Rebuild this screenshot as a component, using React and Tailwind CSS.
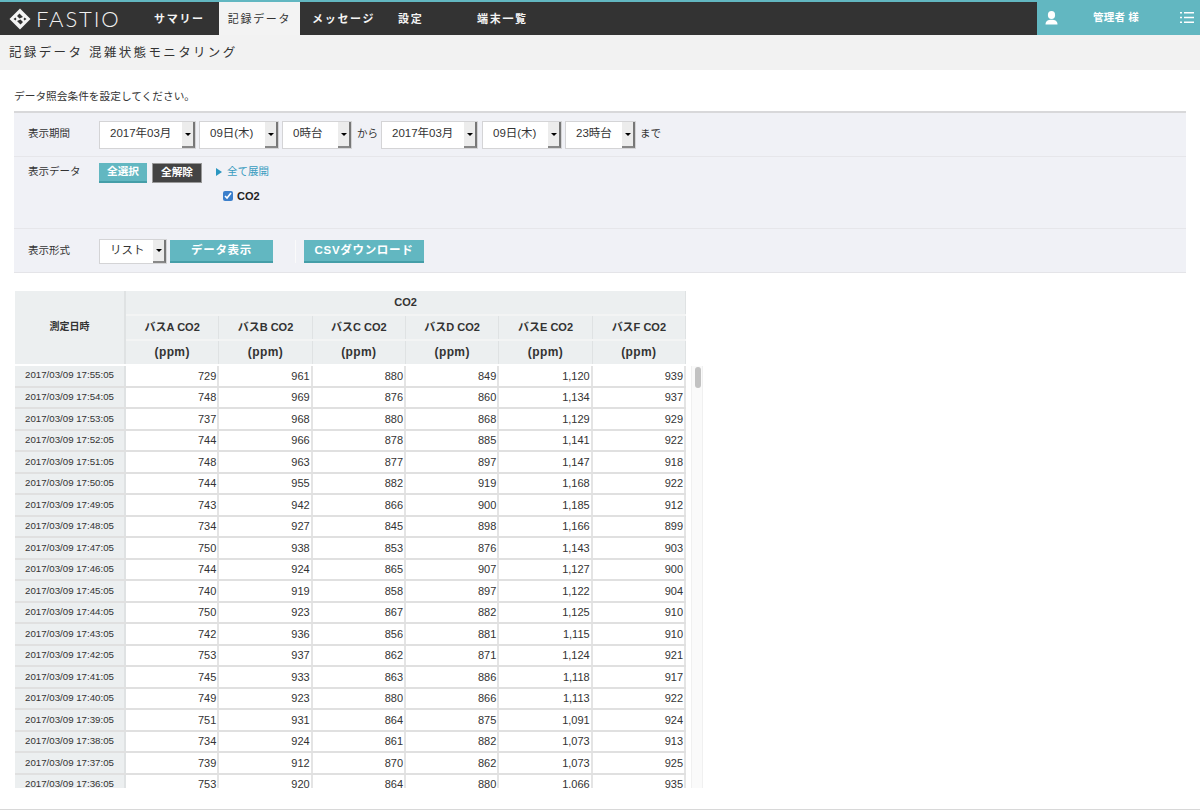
const FONT = 'font-["Liberation_Sans","Noto_Sans_CJK_JP",sans-serif]';

const ROWS = [
  ['17:55:05', '729', '961', '880', '849', '1,120', '939'],
  ['17:54:05', '748', '969', '876', '860', '1,134', '937'],
  ['17:53:05', '737', '968', '880', '868', '1,129', '929'],
  ['17:52:05', '744', '966', '878', '885', '1,141', '922'],
  ['17:51:05', '748', '963', '877', '897', '1,147', '918'],
  ['17:50:05', '744', '955', '882', '919', '1,168', '922'],
  ['17:49:05', '743', '942', '866', '900', '1,185', '912'],
  ['17:48:05', '734', '927', '845', '898', '1,166', '899'],
  ['17:47:05', '750', '938', '853', '876', '1,143', '903'],
  ['17:46:05', '744', '924', '865', '907', '1,127', '900'],
  ['17:45:05', '740', '919', '858', '897', '1,122', '904'],
  ['17:44:05', '750', '923', '867', '882', '1,125', '910'],
  ['17:43:05', '742', '936', '856', '881', '1,115', '910'],
  ['17:42:05', '753', '937', '862', '871', '1,124', '921'],
  ['17:41:05', '745', '933', '863', '886', '1,118', '917'],
  ['17:40:05', '749', '923', '880', '866', '1,113', '922'],
  ['17:39:05', '751', '931', '864', '875', '1,091', '924'],
  ['17:38:05', '734', '924', '861', '882', '1,073', '913'],
  ['17:37:05', '739', '912', '870', '862', '1,073', '925'],
  ['17:36:05', '753', '920', '864', '880', '1,066', '935'],
];

const BUSES = ['バスA CO2', 'バスB CO2', 'バスC CO2', 'バスD CO2', 'バスE CO2', 'バスF CO2'];

function Logo() {
  return (
    <svg width="22" height="22" viewBox="0 0 22 22" className="shrink-0">
      <path d="M11 0.5 L21.5 11 L11 21.5 L0.5 11 Z" fill="#f4f4f4" />
      <path d="M10.5 5.5 L14 9 L10.5 10.5 L8 8 Z M11.5 16.5 L8 13 L11.5 11.5 L14 14 Z" fill="#333" />
      <path d="M4.5 11 L6.5 9.5 L7.5 11 L6.5 12.5 Z M17.5 11 L15.5 9.5 L14.5 11 L15.5 12.5 Z" fill="#333" />
    </svg>
  );
}

function NavItem({ label, className }) {
  return <div className={`text-[11px] font-bold tracking-[1.7px] text-[#f4f4f4] ${className}`}>{label}</div>;
}

function Select({ label, width, height = 'h-[28px]', textPad = 'pb-[2px]' }) {
  return (
    <div className={`flex ${height} ${width} shrink-0 border border-[#d4d4d6] bg-white`}>
      <div className={`flex flex-1 items-center pl-[10px] text-[11.5px] text-[#333] ${textPad}`}>{label}</div>
      <div className="flex w-[13px] items-center justify-center border-r-2 border-b-2 border-r-[#777] border-b-[#888] bg-[#ececec]">
        <div className="h-0 w-0 border-x-[3px] border-t-[3px] border-x-transparent border-t-black" />
      </div>
    </div>
  );
}

function RowLabel({ children }) {
  return <div className="w-[85px] shrink-0 pl-[14px] text-[10.5px] text-[#333]">{children}</div>;
}

function HeadCell({ children, className = '' }) {
  return (
    <div className={`flex items-center justify-center border-r border-[#dfe2e3] bg-[#eceff0] ${className}`}>{children}</div>
  );
}

export default function App() {
  return (
    <div className={`h-[810px] w-[1200px] overflow-hidden border-b border-[#d8d8d8] bg-white ${FONT}`}>
      {/* top bar */}
      <div className="flex h-[35px] border-t-2 border-[#62b7c1] bg-[#333333]">
        <div className="flex w-[154px] shrink-0 items-center pl-[9px]">
          <Logo />
          <span className="ml-[5px] font-['Lato',sans-serif] text-[22px] font-light tracking-[1.9px] text-[#f2f2f2]">FASTIO</span>
        </div>
        <NavItem label="サマリー" className="w-[65px] pt-[9px]" />
        <div className="flex h-[33px] w-[81px] justify-center bg-[#f3f3f3] pt-[9px] text-[11px] tracking-[1.7px] text-[#333]">記録データ</div>
        <NavItem label="メッセージ" className="ml-[12px] w-[86px] pt-[9px]" />
        <NavItem label="設定" className="w-[79px] pt-[9px]" />
        <NavItem label="端末一覧" className="w-[560px] pt-[9px]" />
        <div className="-mt-[2px] flex h-[35px] flex-1 items-center bg-[#62b7c1] text-white">
          <svg width="13" height="14" viewBox="0 0 13 14" className="ml-[8px] shrink-0" fill="white">
            <ellipse cx="6.5" cy="4" rx="3.6" ry="4" />
            <path d="M0.5 13.5 C0.5 10 3 8.8 6.5 8.8 C10 8.8 12.5 10 12.5 13.5 Z" />
          </svg>
          <span className="ml-[35px] w-[87px] text-[10.5px] font-bold tracking-[0.2px]">管理者 様</span>
          <svg width="14" height="13" viewBox="0 0 14 13" className="shrink-0" fill="white">
            <path d="M0 1h2v1.5H0zM4 1h10v1.5H4zM0 5.8h2v1.5H0zM4 5.8h10v1.5H4zM0 10.5h2V12H0zM4 10.5h10V12H4z" />
          </svg>
        </div>
      </div>

      {/* page title */}
      <div className="flex h-[35px] items-center bg-[#f2f2f2] pl-[9px] pt-[1px] text-[12.5px] tracking-[2.35px] text-[#333]">
        記録データ 混雑状態モニタリング
      </div>

      <p className="pl-[14px] pt-[19px] text-[10.7px] leading-[14px] text-[#333]">データ照会条件を設定してください。</p>

      {/* search form */}
      <div className="mx-[14px] mt-[8px] h-[162px] border-t-2 border-b border-t-[#d8d8da] border-b-[#e4e4e8] bg-[#f0f1f6]">
        <div className="flex h-[44px] items-center border-b border-[#e6e6ea] pt-[1px]">
          <RowLabel><span className="relative bottom-px">表示期間</span></RowLabel>
          <Select label="2017年03月" width="w-[97px]" />
          <div className="w-[3px]" />
          <Select label="09日(木)" width="w-[80px]" />
          <div className="w-[3px]" />
          <Select label="0時台" width="w-[70px]" />
          <span className="mx-[5px] w-[19px] whitespace-nowrap pb-[2px] text-[10.5px] text-[#333]">から</span>
          <Select label="2017年03月" width="w-[97px]" />
          <div className="w-[4px]" />
          <Select label="09日(木)" width="w-[80px]" />
          <div className="w-[3px]" />
          <Select label="23時台" width="w-[71px]" />
          <span className="ml-[4px] pb-[2px] text-[10.5px] text-[#333]">まで</span>
        </div>
        <div className="h-[72px] border-b border-[#e6e6ea] pt-[6px]">
          <div className="flex items-start">
            <RowLabel><span className="block leading-[16px]">表示データ</span></RowLabel>
            <button className="h-[20px] w-[48px] border-b-2 border-[#459ea8] bg-[#62b7c1] pb-px text-[10.7px] font-bold text-white">全選択</button>
            <button className="ml-[5px] h-[20px] w-[50px] border border-[#999] bg-[#444] pb-[3px] text-[10.7px] font-bold text-white">全解除</button>
            <div className="ml-[14px] flex h-[18px] items-center text-[10.5px] text-[#3a9cc0]">
              <span className="mr-[5px] h-0 w-0 border-y-[4px] border-l-[6px] border-y-transparent border-l-[#2a96c0]" />
              全て展開
            </div>
          </div>
          <div className="ml-[209px] mt-[5px] flex items-center">
            <input type="checkbox" defaultChecked className="m-0 h-[10px] w-[10px] accent-[#3b7fcb]" />
            <span className="ml-[4px] text-[11px] font-bold text-[#222]">CO2</span>
          </div>
        </div>
        <div className="flex h-[44px] items-center">
          <RowLabel>表示形式</RowLabel>
          <Select label="リスト" width="w-[68px]" height="h-[25px]" textPad="" />
          <button className="ml-[3px] h-[23px] w-[103px] border-b-2 border-[#459ea8] bg-[#62b7c1] pt-[2px] text-[11.5px] font-bold tracking-[0.06em] text-white">データ表示</button>
          <div className="ml-[22px] h-[23px] w-px bg-[#fafafa]" />
          <button className="ml-[8px] h-[23px] w-[120px] border-b-2 border-[#459ea8] bg-[#62b7c1] pt-[2px] text-[11.5px] font-bold tracking-[0.06em] text-white">CSVダウンロード</button>
        </div>
      </div>

      {/* data table */}
      <div className="ml-[15px] mt-[18px] w-[688px]">
        <div className="flex w-[671px] text-[11px] font-bold text-[#333]">
          <HeadCell className="w-[111px] shrink-0 border-r-2 pb-[2px] text-[10px]">測定日時</HeadCell>
          <div className="flex-1">
            <HeadCell className="h-[23px]">CO2</HeadCell>
            <div className="grid h-[25px] grid-cols-6 border-t-2 border-[#f3f4f4]">
              {BUSES.map((b) => (
                <HeadCell key={b}>{b}</HeadCell>
              ))}
            </div>
            <div className="grid h-[25px] grid-cols-6 border-t-2 border-[#f3f4f4]">
              {BUSES.map((b) => (
                <HeadCell key={b} className="pb-[2px] text-[12px] tracking-[0.4px]">(ppm)</HeadCell>
              ))}
            </div>
          </div>
        </div>
        <div className="flex">
          <div className="mt-[2px] h-[422px] w-[671px] shrink-0 overflow-hidden">
            {ROWS.map((r) => (
              <div key={r[0]} className="flex h-[21.53px] border-b-2 border-[#e0e0e0] text-[#333]">
                <div className="flex w-[111px] shrink-0 items-center justify-center border-r-2 border-[#dfe2e3] bg-[#eceff0] text-[9.7px]">2017/03/09 {r[0]}</div>
                <div className="grid flex-1 grid-cols-6">
                  {r.slice(1).map((v, i) => (
                    <div key={i} className="flex items-center justify-end border-r-2 border-[#e4e4e4] pr-px text-[11px]">{v}</div>
                  ))}
                </div>
              </div>
            ))}
          </div>
          <div className="ml-[5px] mt-[2px] h-[422px] w-[12px] border-x border-[#f0f0f0] bg-[#fafafa] pl-[3px] pt-[1px]">
            <div className="h-[21px] w-[6px] rounded-[3px] bg-[#c2c2c2]" />
          </div>
        </div>
      </div>
    </div>
  );
}
